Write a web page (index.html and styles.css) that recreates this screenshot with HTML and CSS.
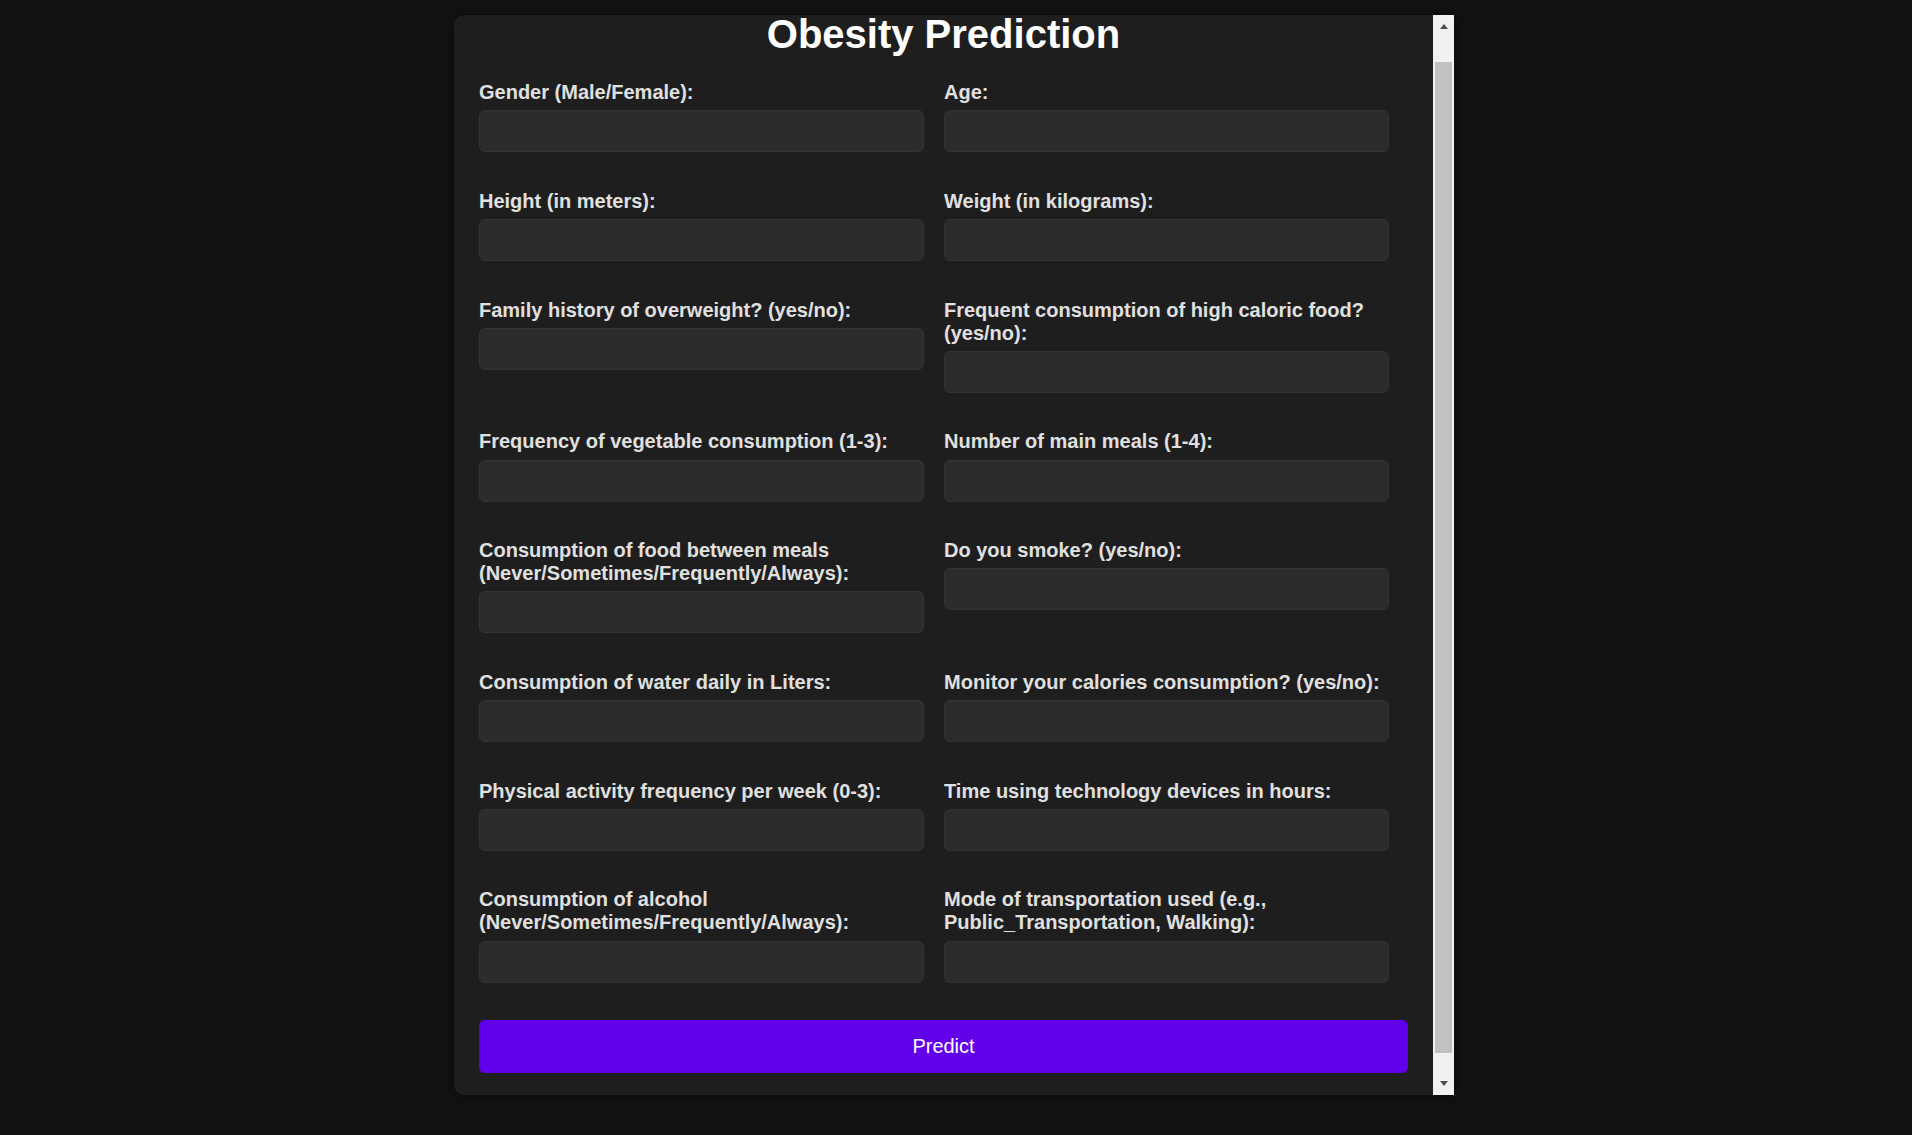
FILE: index.html
```html
<!DOCTYPE html>
<html lang="en">
<head>
<meta charset="utf-8">
<title>Obesity Prediction</title>
<link rel="stylesheet" href="styles.css">
</head>
<body>
<div class="container">
  <div class="content">
    <h1 class="title">Obesity Prediction</h1>
    <form class="form">
      <div class="grid">
        <div class="field"><label for="gender">Gender (Male/Female):</label><input id="gender" type="text"></div>
        <div class="field"><label for="age">Age:</label><input id="age" type="text"></div>
        <div class="field"><label for="height">Height (in meters):</label><input id="height" type="text"></div>
        <div class="field"><label for="weight">Weight (in kilograms):</label><input id="weight" type="text"></div>
        <div class="field"><label for="family">Family history of overweight? (yes/no):</label><input id="family" type="text"></div>
        <div class="field"><label for="favc">Frequent consumption of high caloric food? (yes/no):</label><input id="favc" type="text"></div>
        <div class="field"><label for="fcvc">Frequency of vegetable consumption (1-3):</label><input id="fcvc" type="text"></div>
        <div class="field"><label for="ncp">Number of main meals (1-4):</label><input id="ncp" type="text"></div>
        <div class="field"><label for="caec">Consumption of food between meals (Never/Sometimes/Frequently/Always):</label><input id="caec" type="text"></div>
        <div class="field"><label for="smoke">Do you smoke? (yes/no):</label><input id="smoke" type="text"></div>
        <div class="field"><label for="ch2o">Consumption of water daily in Liters:</label><input id="ch2o" type="text"></div>
        <div class="field"><label for="scc">Monitor your calories consumption? (yes/no):</label><input id="scc" type="text"></div>
        <div class="field"><label for="faf">Physical activity frequency per week (0-3):</label><input id="faf" type="text"></div>
        <div class="field"><label for="tue">Time using technology devices in hours:</label><input id="tue" type="text"></div>
        <div class="field"><label for="calc">Consumption of alcohol (Never/Sometimes/Frequently/Always):</label><input id="calc" type="text"></div>
        <div class="field"><label for="mtrans">Mode of transportation used (e.g., Public_Transportation, Walking):</label><input id="mtrans" type="text"></div>
      </div>
      <button type="submit" class="predict">Predict</button>
    </form>
  </div>
  <div class="scrollbar" aria-hidden="true">
    <div class="sb-btn sb-up"></div>
    <div class="sb-track"><div class="sb-thumb"></div></div>
    <div class="sb-btn sb-down"></div>
  </div>
</div>
</body>
</html>
```

FILE: styles.css
```css
html, body {
  height: 100%;
}

body {
  margin: 0;
  padding: 15px 4px 0 0;
  box-sizing: border-box;
  background: #121212;
  display: flex;
  justify-content: center;
  align-items: flex-start;
  font-family: "Liberation Sans", Arial, sans-serif;
}

.container {
  display: flex;
  width: 1000px;
  height: 1080px;
  background: #1e1e1e;
  border-radius: 10px 0 0 10px;
  box-shadow: 0 0 12px rgba(0, 0, 0, 0.5);
}

.content {
  flex: 1;
  min-width: 0;
  box-sizing: border-box;
  padding: 0.5px 25px 17.5px;
}

.scrollbar {
  display: flex;
  flex-direction: column;
  width: 21px;
  flex-shrink: 0;
  background: #f1f1f1;
}

.sb-btn {
  display: flex;
  justify-content: center;
  height: 21px;
  box-sizing: border-box;
  flex-shrink: 0;
}

.sb-up {
  padding-top: 9px;
}

.sb-down {
  padding-top: 7px;
}

.sb-up::before {
  content: "";
  width: 0;
  height: 0;
  border-left: 4.5px solid transparent;
  border-right: 4.5px solid transparent;
  border-bottom: 5px solid #505050;
}

.sb-down::before {
  content: "";
  width: 0;
  height: 0;
  border-left: 4.5px solid transparent;
  border-right: 4.5px solid transparent;
  border-top: 5px solid #505050;
}

.sb-track {
  flex: 1;
  display: flex;
  flex-direction: column;
}

.sb-thumb {
  margin: 26px 2px 0;
  height: 991px;
  background: #c1c1c1;
}

.title {
  margin: 0 0 29.5px;
  font-size: 40px;
  line-height: 36px;
  font-weight: bold;
  color: #ffffff;
  text-align: center;
}

.form {
  margin: 0;
}

.grid {
  display: grid;
  grid-template-columns: 445px 445px;
  column-gap: 20px;
  row-gap: 37.5px;
  align-items: start;
}

.field label {
  display: block;
  margin-bottom: 6.25px;
  font-size: 20px;
  line-height: 23px;
  font-weight: bold;
  color: #e0e0e0;
}

.field input {
  display: block;
  width: 100%;
  height: 42px;
  box-sizing: border-box;
  padding: 0 10px;
  background: #2c2c2c;
  border: 1px solid #333333;
  border-radius: 6px;
  color: #e0e0e0;
  font-family: inherit;
  font-size: 16px;
  outline: none;
}

.predict {
  display: block;
  width: 100%;
  margin-top: 37.5px;
  padding: 15px 0;
  background: #6200ea;
  border: none;
  border-radius: 6px;
  color: #ffffff;
  font-family: inherit;
  font-size: 20px;
  line-height: 23px;
  text-align: center;
  cursor: pointer;
}
```
